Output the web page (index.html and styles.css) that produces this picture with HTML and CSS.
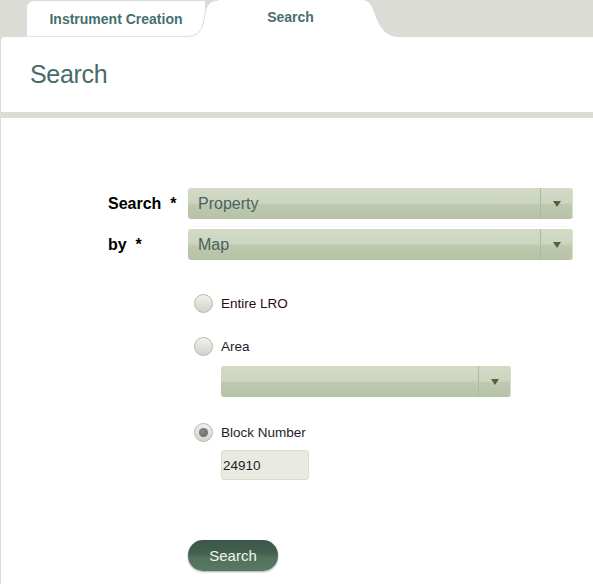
FILE: index.html
```html
<!DOCTYPE html>
<html>
<head>
    <title>Search</title>
    <link rel="stylesheet" href="styles.css">
</head>
<body>
    <div class="tab-bar">
        <div class="tab">Instrument Creation</div>
        <div class="tab tab-active">
            <svg class="tab-shape" width="215" height="37" viewBox="0 0 215 37">
                <path d="M0 37 C10 37 16 33 18 24 L21 9 C23 3 27 0 33 0 L177 0 C183 0 186 4 189 12 C195 30 202 37 215 37 Z" fill="#ffffff"/>
                <path d="M0 36.5 C10 36.5 16 33 18 24 L21 9 C23 3 27 0.5 33 0.5" fill="none" stroke="#dcdcd4" stroke-width="1"/>
            </svg>
            <span>Search</span>
        </div>
    </div>

    <div class="panel">
        <div class="panel-header">
            <h1>Search</h1>
        </div>

        <div class="panel-body">
            <div class="field-row">
                <label>Search&nbsp; *</label>
                <div class="select">
                    <span class="select-value">Property</span>
                    <span class="select-arrow"></span>
                </div>
            </div>
            <div class="field-row">
                <label>by&nbsp; *</label>
                <div class="select">
                    <span class="select-value">Map</span>
                    <span class="select-arrow"></span>
                </div>
            </div>

            <div class="options">
                <div class="option">
                    <span class="radio"></span>
                    <span class="option-label label-dark">Entire LRO</span>
                </div>
                <div class="option option-area">
                    <span class="radio"></span>
                    <span class="option-label">Area</span>
                </div>
                <div class="sub-control">
                    <div class="select select-small">
                        <span class="select-value"></span>
                        <span class="select-arrow"></span>
                    </div>
                </div>
                <div class="option option-block">
                    <span class="radio checked"></span>
                    <span class="option-label">Block Number</span>
                </div>
                <div class="sub-control sub-input">
                    <input type="text" class="text-input" value="24910">
                </div>
            </div>

            <button class="search-btn">Search</button>
        </div>
    </div>
</body>
</html>
```

FILE: styles.css
```css
body {
    font-family: "Liberation Sans", Arial, sans-serif;
    background-color: #dcdcd6;
    margin: 0;
    height: 584px;
    overflow: hidden;
}

/* tabs */
.tab-bar {
    display: flex;
    height: 37px;
    padding-left: 27px;
}

.tab {
    position: relative;
    width: 178px;
    height: 35px;
    margin-top: 1px;
    background: #ffffff;
    border-bottom: 1px solid #e6e6de;
    border-radius: 7px 0 0 0;
    text-align: center;
    line-height: 36px;
    font-size: 14px;
    font-weight: bold;
    color: #457070;
}

.tab-active {
    width: 215px;
    height: 37px;
    margin-top: 0;
    margin-left: -20px;
    background: none;
    border: none;
    line-height: 34px;
}

.tab-shape {
    position: absolute;
    left: 0;
    top: 0;
}

.tab-active span {
    position: relative;
    margin-left: -4px;
}

/* panel */
.panel {
    margin-left: 1px;
    background: #ffffff;
    border-radius: 4px 0 0 0;
    height: 547px;
}

.panel-header {
    height: 75px;
    display: flex;
    align-items: center;
    padding-left: 29px;
    border-bottom: 6px solid #dcdcd6;
}

h1 {
    margin: 0;
    font-size: 25px;
    font-weight: normal;
    letter-spacing: -0.3px;
    color: #4a6a6a;
}

.panel-body {
    padding-top: 70px;
    padding-left: 107px;
}

.field-row {
    display: flex;
    align-items: center;
    margin-bottom: 10px;
}

.field-row label {
    width: 80px;
    font-size: 16px;
    font-weight: bold;
    color: #000000;
}

/* select boxes */
.select {
    display: flex;
    width: 385px;
    height: 31px;
    border-radius: 3px;
    background: linear-gradient(#d3dbc7 0%, #ccd5bf 48%, #bdc8ae 54%, #b7c3a7 100%);
    box-shadow: inset -1px 0 0 #d8e0cc;
}

.select-value {
    flex: 1;
    padding-left: 10px;
    line-height: 31px;
    font-size: 16px;
    color: #4a6262;
}

.select-arrow {
    width: 32px;
    border-left: 1px solid #aebb98;
    display: flex;
    align-items: center;
    justify-content: center;
}

.select-arrow::after {
    content: "";
    border-left: 4px solid transparent;
    border-right: 4px solid transparent;
    border-top: 6px solid #55623a;
}

.select-small {
    width: 290px;
}

/* radio options */
.options {
    margin-top: 33px;
    padding-left: 86px;
}

.option {
    display: flex;
    align-items: center;
    gap: 8px;
    height: 20px;
}

.option-area {
    margin-top: 23px;
}

.option-block {
    margin-top: 25px;
}

.radio {
    width: 17px;
    height: 17px;
    border: 1px solid #b8b8b0;
    border-radius: 50%;
    background: linear-gradient(#f2f2ee 0%, #e2e2dc 50%, #d2d2cc 100%);
    display: flex;
    align-items: center;
    justify-content: center;
}

.radio.checked::after {
    content: "";
    width: 9px;
    height: 9px;
    border-radius: 50%;
    background: radial-gradient(circle at 40% 40%, #8a8a8a, #606060);
}

.option-label {
    font-size: 13.5px;
    color: #1c1c2a;
}

.label-dark {
    color: #2a0a0a;
}

.sub-control {
    margin-top: 10px;
    padding-left: 27px;
}

.sub-input {
    margin-top: 8px;
}

.text-input {
    display: block;
    box-sizing: border-box;
    width: 88px;
    height: 30px;
    padding: 0 0 0 1px;
    border: 1px solid #dadcd2;
    border-radius: 3px;
    background: #e9ebe3;
    font-family: "Liberation Sans", Arial, sans-serif;
    font-size: 13.5px;
    color: #222222;
}

/* button */
.search-btn {
    margin-top: 60px;
    margin-left: 80px;
    width: 90px;
    height: 31px;
    border: none;
    border-radius: 15px;
    background: linear-gradient(#3c5748 0%, #44604f 45%, #51705c 55%, #5a7965 100%);
    box-shadow: 0 1px 2px rgba(0, 0, 0, 0.35);
    font-family: "Liberation Sans", Arial, sans-serif;
    font-size: 15px;
    color: #eef4ee;
    cursor: pointer;
}
```
